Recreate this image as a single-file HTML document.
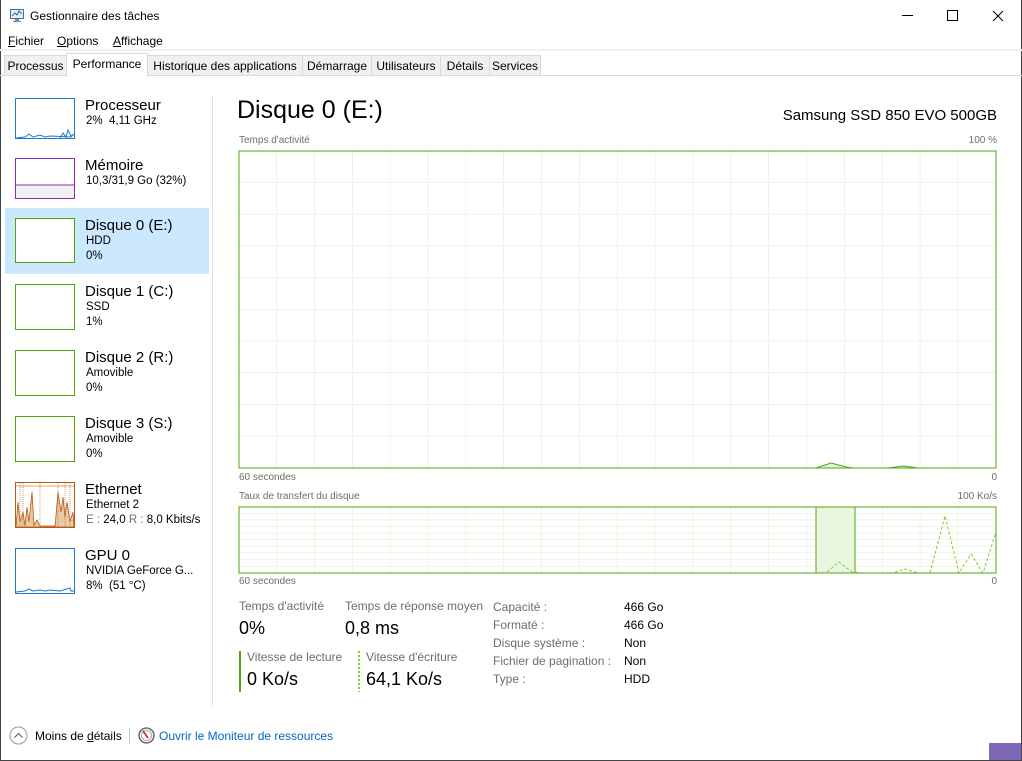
<!DOCTYPE html>
<html><head><meta charset="utf-8">
<style>
*{margin:0;padding:0;box-sizing:border-box}
body{width:1022px;height:761px;overflow:hidden;background:#fff;font-family:"Segoe UI","Liberation Sans",sans-serif;font-size:12px;color:#000;position:relative}
.a{position:absolute;white-space:nowrap}
.tab{position:absolute;top:55px;height:21px;background:#f0f0f0;border:1px solid #d9d9d9;border-bottom:none;font-size:12px;padding:3px 0 0 0;text-align:center}
.g{color:#6d6d6d}
.nm{font-size:15px}
.sub{font-size:11.5px}
</style></head><body>
<div class="a" style="left:0;top:0;width:1px;height:761px;background:#444"></div>
<div class="a" style="right:0;top:0;width:1px;height:761px;background:#444"></div>
<div class="a" style="left:0;bottom:0;width:1022px;height:1px;background:#444"></div>
<svg class="a" style="left:9px;top:8px" width="16" height="15" viewBox="0 0 16 15"><rect x="1.5" y="1.5" width="13" height="9" fill="#e8f1f8" stroke="#4a6f8f"/><polyline points="3,8 6,5 8,7 10,3 13,6" fill="none" stroke="#2a7fc0" stroke-width="1.2"/><rect x="6" y="11" width="4" height="2" fill="#7a8a99"/><rect x="4" y="13" width="8" height="1" fill="#7a8a99"/></svg>
<div class="a" style="left:30px;top:9px;font-size:12px">Gestionnaire des tâches</div>
<div class="a" style="left:902px;top:15px;width:11px;height:1px;background:#000"></div>
<div class="a" style="left:947px;top:10px;width:11px;height:11px;border:1px solid #000"></div>
<svg class="a" style="left:992px;top:10px" width="12" height="12"><path d="M1 1L11 11M11 1L1 11" stroke="#000" stroke-width="1"/></svg>
<div class="a" style="left:8px;top:34px"><u>F</u>ichier</div>
<div class="a" style="left:57px;top:34px"><u>O</u>ptions</div>
<div class="a" style="left:113px;top:34px"><u>A</u>ffichage</div>
<div class="a" style="left:0;top:49px;width:1022px;height:2px;background:#f0f0f0"></div>
<div class="tab" style="left:4px;width:63px">Processus</div>
<div class="tab" style="left:66px;top:53px;height:24px;width:82px;background:#fff;z-index:2">Performance</div>
<div class="tab" style="left:147px;width:156px">Historique des applications</div>
<div class="tab" style="left:302px;width:70px">Démarrage</div>
<div class="tab" style="left:371px;width:70px">Utilisateurs</div>
<div class="tab" style="left:440px;width:50px">Détails</div>
<div class="tab" style="left:489px;width:52px">Services</div>
<div class="a" style="left:0;top:75px;width:1022px;height:1px;background:#d9d9d9"></div>
<div class="a" style="left:212px;top:97px;width:1px;height:610px;background:#e0e0e0"></div>
<div class="a" style="left:5px;top:208px;width:204px;height:66px;background:#cce8ff"></div>
<svg class="a" style="left:15px;top:98px" width="60" height="41"><rect x=".5" y=".5" width="59" height="40" fill="#fff" stroke="#1979ca"/><polyline points="1,40 10,39 14,36 18,39 25,37 30,39 35,38 56,39 58,37" fill="none" stroke="#1979ca"/><polyline points="45,40 48,35 51,39 53,32 56,38 59,36" fill="none" stroke="#1979ca"/></svg>
<div class="a nm" style="left:85px;top:97px">Processeur</div><div class="a sub" style="left:86px;top:115px">2%&nbsp; 4,11 GHz</div>
<svg class="a" style="left:15px;top:158px" width="60" height="41"><rect x=".5" y=".5" width="59" height="40" fill="#fff" stroke="#9528b4"/><rect x="1" y="27" width="58" height="13" fill="#f2eff2"/><line x1="1" y1="27" x2="59" y2="27" stroke="#9528b4"/></svg>
<div class="a nm" style="left:85px;top:157px">Mémoire</div><div class="a sub" style="left:86px;top:175px">10,3/31,9 Go (32%)</div>
<svg class="a" style="left:15px;top:218px" width="60" height="45"><rect x=".5" y=".5" width="59" height="44" fill="#fff" stroke="#4da60c"/></svg>
<div class="a nm" style="left:85px;top:217px">Disque 0 (E:)</div><div class="a sub" style="left:86px;top:235px">HDD</div><div class="a sub" style="left:86px;top:250px">0%</div>
<svg class="a" style="left:15px;top:284px" width="60" height="46"><rect x=".5" y=".5" width="59" height="45" fill="#fff" stroke="#4da60c"/></svg>
<div class="a nm" style="left:85px;top:283px">Disque 1 (C:)</div><div class="a sub" style="left:86px;top:301px">SSD</div><div class="a sub" style="left:86px;top:316px">1%</div>
<svg class="a" style="left:15px;top:350px" width="60" height="46"><rect x=".5" y=".5" width="59" height="45" fill="#fff" stroke="#4da60c"/></svg>
<div class="a nm" style="left:85px;top:349px">Disque 2 (R:)</div><div class="a sub" style="left:86px;top:367px">Amovible</div><div class="a sub" style="left:86px;top:382px">0%</div>
<svg class="a" style="left:15px;top:416px" width="60" height="46"><rect x=".5" y=".5" width="59" height="45" fill="#fff" stroke="#4da60c"/></svg>
<div class="a nm" style="left:85px;top:415px">Disque 3 (S:)</div><div class="a sub" style="left:86px;top:433px">Amovible</div><div class="a sub" style="left:86px;top:448px">0%</div>
<svg class="a" style="left:15px;top:482px" width="60" height="46"><rect x=".5" y=".5" width="59" height="45" fill="#fff" stroke="#b85a13"/><line x1="1" y1="4" x2="59" y2="4" stroke="#d8a070"/><polygon points="1,45 3,20 5,40 8,30 10,44 12,25 14,40 17,10 19,43 22,38 25,44 40,44 42,45" fill="#e9c8a8" stroke="#b85a13" stroke-width=".8"/><polygon points="40,45 43,10 46,30 48,15 50,35 52,20 55,40 58,30 59,45" fill="#e9c8a8" stroke="#b85a13" stroke-width=".8"/><path d="M5 1V45M8 1V45M25 1V45M43 1V45M50 1V45M55 1V45" stroke="#c0703a" stroke-dasharray="1,1" stroke-width=".7"/></svg>
<div class="a nm" style="left:85px;top:481px">Ethernet</div><div class="a sub" style="left:86px;top:499px">Ethernet 2</div><div class="a sub" style="left:86px;top:514px"><span class="g">E :</span> 24,0 <span class="g">R :</span> 8,0 Kbits/s</div>
<svg class="a" style="left:15px;top:548px" width="60" height="46"><rect x=".5" y=".5" width="59" height="45" fill="#fff" stroke="#1979ca"/><polyline points="1,44 10,43 14,41 18,43 25,42 30,43 35,42 45,43 55,40 56,43 59,43" fill="none" stroke="#1979ca"/></svg>
<div class="a nm" style="left:85px;top:547px">GPU 0</div><div class="a sub" style="left:86px;top:565px">NVIDIA GeForce G...</div><div class="a sub" style="left:86px;top:580px">8%&nbsp; (51 °C)</div>
<div class="a" style="left:237px;top:96px;font-size:25px">Disque 0 (E:)</div>
<div class="a" style="right:25px;top:107px;font-size:15px">Samsung SSD 850 EVO 500GB</div>
<div class="a g" style="left:239px;top:135px;font-size:10px">Temps d'activité</div>
<div class="a g" style="right:25px;top:135px;font-size:10px">100 %</div>
<svg class="a" style="left:238px;top:150px" width="760" height="320">
<defs><pattern id="p1" x="1" y="1" width="37.85" height="31.7" patternUnits="userSpaceOnUse"><path d="M37.85 0V31.7M0 31.7H37.85" stroke="#d9eecb" fill="none"/></pattern>
<pattern id="p2" x="1" y="1" width="37.85" height="6.6" patternUnits="userSpaceOnUse"><path d="M37.85 0V6.6M0 6.6H37.85" stroke="#d9eecb" fill="none"/></pattern></defs>
<rect x="1" y="1" width="757" height="317" fill="url(#p1)"/>
<polyline points="578,318 593,313 608,317 615,318 650,318 665,316 680,318" fill="#eaf5e0" stroke="#4da60c" stroke-width="1"/>
<rect x="1" y="1" width="757" height="317" fill="none" stroke="#4da60c"/>
</svg>
<div class="a g" style="left:239px;top:472px;font-size:10px">60 secondes</div>
<div class="a g" style="right:25px;top:472px;font-size:10px">0</div>
<div class="a g" style="left:239px;top:491px;font-size:10px">Taux de transfert du disque</div>
<div class="a g" style="right:25px;top:491px;font-size:10px">100 Ko/s</div>
<svg class="a" style="left:238px;top:506px" width="760" height="69">
<rect x="1" y="1" width="757" height="66" fill="url(#p2)"/>
<rect x="578" y="1" width="39" height="66" fill="#eaf5e0" stroke="#4da60c"/>
<polyline points="578,67 617,67 630,67" fill="none" stroke="#4da60c"/>
<polyline points="589,66 601,56 614,66 625,67 655,67 667,63 680,67" fill="none" stroke="#7fcf30" stroke-dasharray="3,2"/>
<polyline points="692,67 707,10 721,67 733,48 745,67 758,26" fill="none" stroke="#7fcf30" stroke-dasharray="3,2"/>
<rect x="1" y="1" width="757" height="66" fill="none" stroke="#4da60c"/>
</svg>
<div class="a g" style="left:239px;top:576px;font-size:10px">60 secondes</div>
<div class="a g" style="right:25px;top:576px;font-size:10px">0</div>
<div class="a g" style="left:239px;top:599px">Temps d'activité</div>
<div class="a" style="left:239px;top:618px;font-size:18px">0%</div>
<div class="a g" style="left:345px;top:599px">Temps de réponse moyen</div>
<div class="a" style="left:345px;top:618px;font-size:18px">0,8 ms</div>
<div class="a" style="left:239px;top:651px;width:2px;height:41px;background:#4da60c"></div>
<div class="a g" style="left:247px;top:650px">Vitesse de lecture</div>
<div class="a" style="left:247px;top:669px;font-size:18px">0 Ko/s</div>
<div class="a" style="left:358px;top:651px;width:2px;height:41px;background:repeating-linear-gradient(#7fcf30 0 2px,transparent 2px 4px)"></div>
<div class="a g" style="left:366px;top:650px">Vitesse d'écriture</div>
<div class="a" style="left:366px;top:669px;font-size:18px">64,1 Ko/s</div>
<div class="a g" style="left:493px;top:598px;line-height:18px">Capacité :<br>Formaté :<br>Disque système :<br>Fichier de pagination :<br>Type :</div>
<div class="a" style="left:624px;top:598px;line-height:18px">466 Go<br>466 Go<br>Non<br>Non<br>HDD</div>
<svg class="a" style="left:9px;top:726px" width="19" height="19"><circle cx="9.5" cy="9.5" r="8.5" fill="#fff" stroke="#999"/><path d="M5.5 11.5L9.5 7.5L13.5 11.5" fill="none" stroke="#666" stroke-width="1.2"/></svg>
<div class="a" style="left:35px;top:729px">Moins de <u>d</u>étails</div>
<div class="a" style="left:129px;top:728px;width:1px;height:16px;background:#ccc"></div>
<svg class="a" style="left:138px;top:727px" width="17" height="17"><circle cx="8.5" cy="8.5" r="7.5" fill="#f4f4f4" stroke="#555" stroke-width="1.3"/><circle cx="8.5" cy="8.5" r="5" fill="#fff" stroke="#aaa"/><path d="M5 4L10 11" stroke="#d02020" stroke-width="1.6"/></svg>
<div class="a" style="left:159px;top:729px;color:#0066cc">Ouvrir le Moniteur de ressources</div>
<div class="a" style="left:989px;top:743px;width:32px;height:17px;background:#7b68b8"></div>
</body></html>
